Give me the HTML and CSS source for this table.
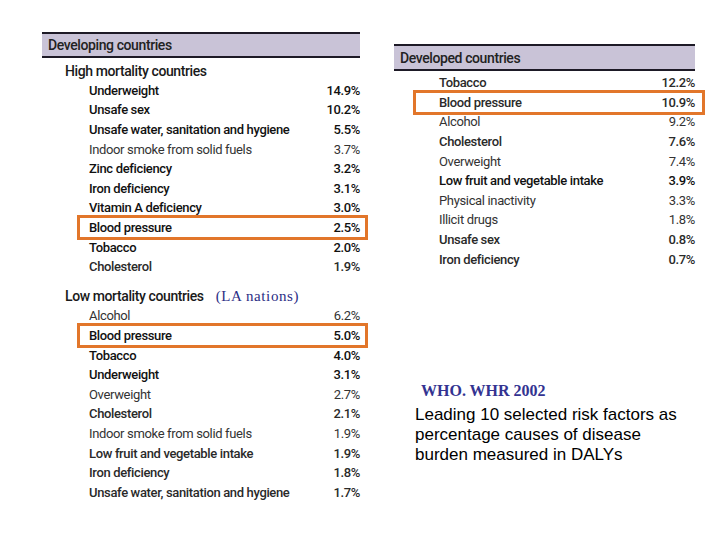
FILE: index.html
```html
<!DOCTYPE html>
<html>
<head>
<meta charset="utf-8">
<link rel="stylesheet" href="styles.css">
</head>
<body>
<div class="slide">
  <section class="table left">
    <div class="head">Developing countries</div>
    <div class="group">High mortality countries</div>
    <div class="row b"><span>Underweight</span><span>14.9%</span></div>
    <div class="row b"><span>Unsafe sex</span><span>10.2%</span></div>
    <div class="row b"><span>Unsafe water, sanitation and hygiene</span><span>5.5%</span></div>
    <div class="row l"><span>Indoor smoke from solid fuels</span><span>3.7%</span></div>
    <div class="row b"><span>Zinc deficiency</span><span>3.2%</span></div>
    <div class="row b"><span>Iron deficiency</span><span>3.1%</span></div>
    <div class="row b"><span>Vitamin A deficiency</span><span>3.0%</span></div>
    <div class="row b hl"><span>Blood pressure</span><span>2.5%</span></div>
    <div class="row b"><span>Tobacco</span><span>2.0%</span></div>
    <div class="row m"><span>Cholesterol</span><span>1.9%</span></div>
    <div class="group low">Low mortality countries <span class="note-la">(LA nations)</span></div>
    <div class="row l"><span>Alcohol</span><span>6.2%</span></div>
    <div class="row b hl"><span>Blood pressure</span><span>5.0%</span></div>
    <div class="row b"><span>Tobacco</span><span>4.0%</span></div>
    <div class="row b"><span>Underweight</span><span>3.1%</span></div>
    <div class="row l"><span>Overweight</span><span>2.7%</span></div>
    <div class="row m"><span>Cholesterol</span><span>2.1%</span></div>
    <div class="row l"><span>Indoor smoke from solid fuels</span><span>1.9%</span></div>
    <div class="row m"><span>Low fruit and vegetable intake</span><span>1.9%</span></div>
    <div class="row m"><span>Iron deficiency</span><span>1.8%</span></div>
    <div class="row m"><span>Unsafe water, sanitation and hygiene</span><span>1.7%</span></div>
  </section>
  <div class="right">
    <section class="table rt">
      <div class="head">Developed countries</div>
      <div class="row m"><span>Tobacco</span><span>12.2%</span></div>
      <div class="row m hl"><span>Blood pressure</span><span>10.9%</span></div>
      <div class="row l"><span>Alcohol</span><span>9.2%</span></div>
      <div class="row m"><span>Cholesterol</span><span>7.6%</span></div>
      <div class="row l"><span>Overweight</span><span>7.4%</span></div>
      <div class="row b"><span>Low fruit and vegetable intake</span><span>3.9%</span></div>
      <div class="row l"><span>Physical inactivity</span><span>3.3%</span></div>
      <div class="row l"><span>Illicit drugs</span><span>1.8%</span></div>
      <div class="row m"><span>Unsafe sex</span><span>0.8%</span></div>
      <div class="row m"><span>Iron deficiency</span><span>0.7%</span></div>
    </section>
    <div class="caption">
      <div class="src">WHO. WHR 2002</div>
      <p class="desc">Leading 10 selected risk factors as percentage causes of disease burden measured in DALYs</p>
    </div>
  </div>
</div>
</body>
</html>
```

FILE: styles.css
```css
html, body {
  margin: 0;
  padding: 0;
  background: #fff;
}
.slide {
  width: 720px;
  height: 540px;
  box-sizing: border-box;
  padding: 32px 0 0 42px;
  display: flex;
  align-items: flex-start;
  gap: 34px;
  font-family: "Roboto", "Liberation Sans", sans-serif;
  color: #1c1c1c;
  overflow: hidden;
}
.right {
  padding-top: 12px;
}
.table {
  display: flex;
  flex-direction: column;
}
.table.left { width: 318px; }
.table.rt { width: 301px; }
.head {
  height: 22px;
  border-top: 2px solid #1d1a26;
  border-bottom: 2px solid #1d1a26;
  background: #c9c3d7;
  display: flex;
  align-items: center;
  padding-left: 6px;
  font-size: 14px;
  font-weight: 500;
  letter-spacing: -0.4px;
  color: #222;
  margin-bottom: 3px;
}
.rt .head {
  height: 23px;
  margin-bottom: 2px;
}
.group {
  height: 19.6px;
  display: flex;
  align-items: center;
  padding-left: 23px;
  font-size: 14px;
  font-weight: 500;
  letter-spacing: -0.4px;
  color: #1a1a1a;
}
.group.low {
  margin-top: 10px;
}
.note-la {
  font-family: "Liberation Serif", serif;
  font-weight: normal;
  font-size: 15px;
  color: #2b2d85;
  margin-left: 12px;
  letter-spacing: 0.6px;
}
.row {
  position: relative;
  height: 19.6px;
  display: flex;
  align-items: center;
  justify-content: space-between;
  padding-left: 47px;
  font-size: 13px;
  letter-spacing: -0.35px;
}
.rt .row { padding-left: 45px; }
.row.b { font-weight: 500; color: #111; }
.row.m { font-weight: 500; color: #2a2a2a; }
.row.l { font-weight: 400; color: #333; }
.row.hl::after {
  content: "";
  position: absolute;
  left: 35px;
  right: -8px;
  top: -3px;
  bottom: -3px;
  border: 3px solid #e2762a;
}
.rt .row.hl::after {
  left: 19px;
  right: -10px;
}
.caption {
  margin-top: 112px;
  margin-left: 21px;
}
.src {
  font-family: "Liberation Serif", serif;
  font-weight: bold;
  font-size: 16px;
  color: #333391;
  margin-left: 6px;
  line-height: 20px;
}
.desc {
  margin: 4px 0 0 0;
  width: 272px;
  font-family: "Liberation Sans", Arial, sans-serif;
  font-size: 17px;
  line-height: 20px;
  color: #000;
}
```
